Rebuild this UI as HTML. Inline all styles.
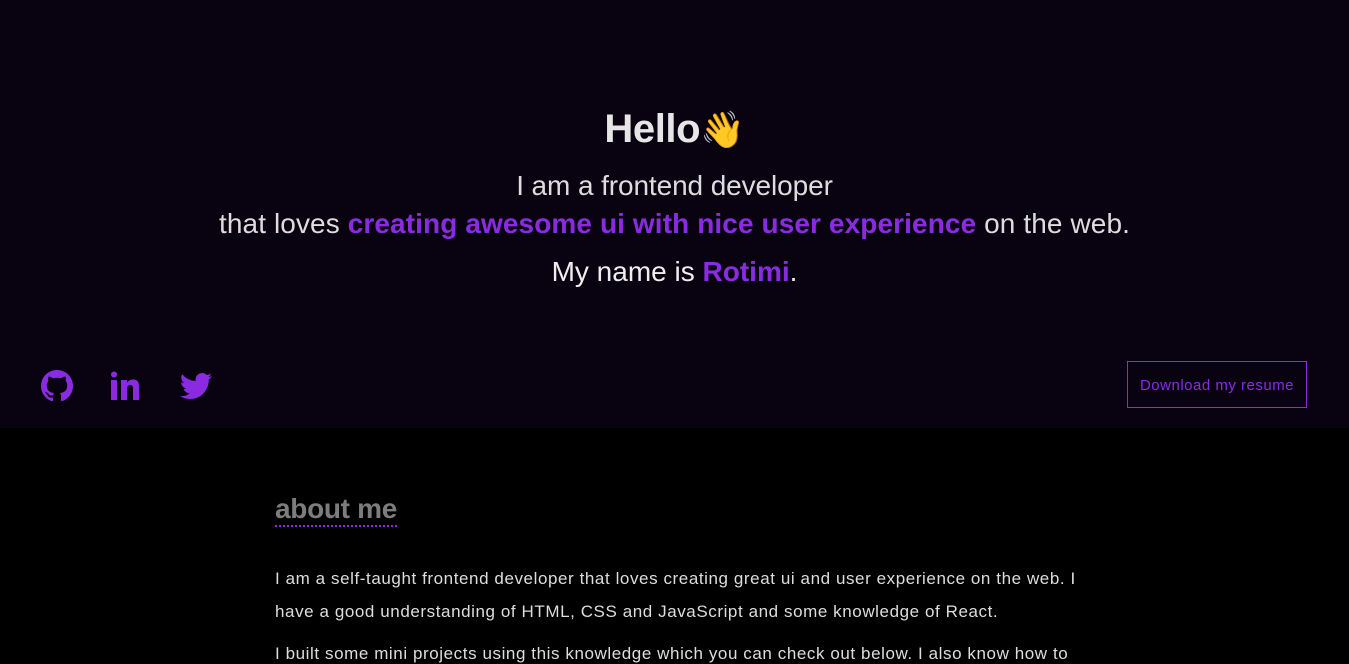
<!DOCTYPE html>
<html><head><meta charset="utf-8"><style>
*{margin:0;padding:0;box-sizing:border-box}
body{width:1349px;height:661px;overflow:hidden;background:#000;font-family:"Liberation Sans",sans-serif;color:#ddd}
.top{height:428px;background:#090311;position:relative}
.c{position:absolute;left:0;width:100%;text-align:center;white-space:nowrap}
.p{color:#8a2be2;font-weight:bold}
h1{font-size:40px;color:#e6e6e6;top:107px;letter-spacing:-0.4px}
.l1{top:170px;font-size:28px;color:#ddd;font-weight:300;letter-spacing:-0.1px}
.l2{top:208px;font-size:28px;color:#ddd;letter-spacing:0.1px}
.l3{top:256px;font-size:28px;color:#eee;letter-spacing:0}
.btn{position:absolute;left:1127px;top:361px;width:180px;height:47px;border:1px solid #8a2be2;color:#8a2be2;font-size:15px;line-height:48px;text-align:center;letter-spacing:0.5px}
.ic{position:absolute;top:370px}
.about{position:absolute;left:275px;top:493px;font-size:28px;font-weight:bold;color:#7d7d7d;border-bottom:2px dotted #8a2be2;line-height:32px;letter-spacing:-0.3px}
.txt{position:absolute;left:275px;font-size:17px;color:#ddd;white-space:nowrap;letter-spacing:0.58px}
</style></head><body>
<div class="top">
<h1 class="c">Hello<span style="font-size:36px;position:relative;top:0px">👋</span></h1>
<div class="c l1">I am a frontend developer</div>
<div class="c l2">that loves <span class="p">creating awesome ui with nice user experience</span> on the web.</div>
<div class="c l3">My name is <span class="p">Rotimi</span>.</div>
<svg class="ic" style="left:41px" width="32" height="32" viewBox="0 0 16 16"><path fill="#8a2be2" d="M8 0C3.58 0 0 3.580 0 8c0 3.54 2.29 6.53 5.47 7.59.4.07.55-.17.55-.38 0-.19-.01-.82-.01-1.490-2.010.37-2.53-.49-2.69-.94-.09-.23-.48-.94-.82-1.13-.28-.15-.68-.52-.01-.53.63-.01 1.08.58 1.23.82.72 1.21 1.87.87 2.33.66.07-.52.28-.87.51-1.07-1.78-.2-3.640-.89-3.640-3.95 0-.87.31-1.59.82-2.15-.08-.2-.36-1.02.08-2.12 0 0 .67-.21 2.2.82.64-.18 1.32-.27 2-.27.68 0 1.36.09 2 .27 1.53-1.04 2.2-.82 2.2-.82.44 1.1.16 1.92.08 2.12.51.56.82 1.27.82 2.15 0 3.07-1.87 3.75-3.65 3.95.29.25.54.73.54 1.48 0 1.07-.01 1.93-.01 2.2 0 .21.15.46.55.38A8.013 8.013 0 0016 8c0-4.42-3.58-8-8-8z"/></svg>
<svg class="ic" style="left:110px" width="32" height="32" viewBox="0 0 32 32"><circle cx="4" cy="4.5" r="3" fill="#8a2be2"/><rect x="1" y="10" width="6" height="20" fill="#8a2be2"/><path fill="#8a2be2" d="M11 10h6v3c1-2 3-3.5 6-3.5 5 0 6 3 6 7.5V30h-6V19c0-2.5-.5-4-2.7-4-2.5 0-3.3 1.6-3.3 4v11h-6z"/></svg>
<svg class="ic" style="left:180px" width="32" height="32" viewBox="0 0 24 24"><path fill="#8a2be2" d="M23.95 4.57a10 10 0 01-2.82.77 4.96 4.96 0 002.16-2.72c-.95.56-2 .96-3.12 1.19a4.920 4.920 0 00-8.38 4.48A13.94 13.94 0 011.64 3.16a4.920 4.920 0 001.52 6.57 4.9 4.9 0 01-2.23-.61v.06a4.920 4.920 0 003.95 4.83 4.96 4.96 0 01-2.21.08 4.93 4.93 0 004.6 3.42A9.87 9.87 0 010 19.54a14 14 0 007.56 2.21c9.05 0 14-7.5 14-13.98 0-.21 0-.42-.02-.63A9.94 9.94 0 0024 4.59z"/></svg>
<div class="btn">Download my resume</div>
</div>
<div class="about">about me</div>
<div class="txt" style="top:569px">I am a self-taught frontend developer that loves creating great ui and user experience on the web. I</div>
<div class="txt" style="top:602px">have a good understanding of HTML, CSS and JavaScript and some knowledge of React.</div>
<div class="txt" style="top:644px">I built some mini projects using this knowledge which you can check out below. I also know how to</div>
</body></html>
